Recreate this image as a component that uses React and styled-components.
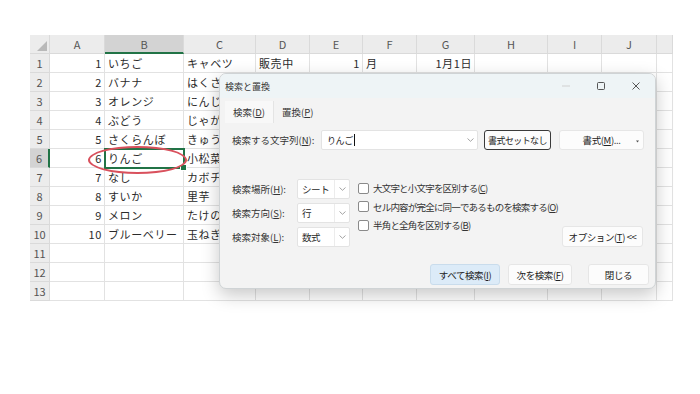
import React from "react";
import styled, { createGlobalStyle } from "styled-components";

const GlobalStyle = createGlobalStyle`
  html, body {
    margin: 0;
    padding: 0;
    background: #fff;
  }
  body {
    font-family: "Noto Sans CJK JP", "Noto Sans", sans-serif;
  }
`;

const columns = ["A", "B", "C", "D", "E", "F", "G", "H", "I", "J", ""];
const colWidths = [20, 55, 79, 72, 54, 53, 54, 58, 73, 54, 55, 16];

const rows = [
  ["1", "いちご", "キャベツ", "販売中", "1", "月", "1月1日"],
  ["2", "バナナ", "はくさい"],
  ["3", "オレンジ", "にんじん"],
  ["4", "ぶどう", "じゃがいも"],
  ["5", "さくらんぼ", "きゅうり"],
  ["6", "りんご", "小松菜"],
  ["7", "なし", "カボチャ"],
  ["8", "すいか", "里芋"],
  ["9", "メロン", "たけのこ"],
  ["10", "ブルーベリー", "玉ねぎ"],
  [],
  [],
  [],
];

// columns holding numbers / dates are right aligned
const rightCols = [0, 4, 6];

const Page = styled.div`
  position: relative;
  width: 700px;
  height: 394px;
  padding: 35px 0 0 30px;
  box-sizing: border-box;
  overflow: hidden;
`;

const Sheet = styled.div`
  display: grid;
  grid-template-columns: ${colWidths.map((w) => w + "px").join(" ")};
  grid-auto-rows: 19px;
  width: max-content;
  font-size: 11px;
  color: #2b2b2b;
`;

const Cell = styled.div`
  position: relative;
  box-sizing: border-box;
  display: flex;
  align-items: center;
  justify-content: ${(p) => (p.$right ? "flex-end" : "flex-start")};
  padding: 0 2px 0 3px;
  border-right: 1px solid #e2e2e2;
  border-bottom: 1px solid #e2e2e2;
  white-space: nowrap;
  overflow: ${(p) => (p.$active ? "visible" : "hidden")};
  letter-spacing: 0.6px;
  ${(p) =>
    p.$active &&
    `
    z-index: 1;
    outline: 2px solid #217346;
    outline-offset: -1px;
    &::after {
      content: "";
      position: absolute;
      right: -4px;
      bottom: -4px;
      width: 5px;
      height: 5px;
      background: #217346;
      border: 1px solid #fff;
    }
  `}
`;

const HeadCell = styled.div`
  box-sizing: border-box;
  display: flex;
  align-items: center;
  justify-content: center;
  background: ${(p) => (p.$selected ? "#d3d3d3" : "#ececec")};
  color: #555;
  border-right: ${(p) =>
    p.$selected && p.$row ? "2px solid #217346" : "1px solid #dadada"};
  border-bottom: ${(p) =>
    p.$selected && !p.$row ? "2px solid #217346" : "1px solid #dadada"};
  font-size: 11px;
`;

const Corner = styled(HeadCell)`
  align-items: flex-end;
  justify-content: flex-end;
  padding: 0 2px 2px 0;
`;

const Circle = styled.div`
  position: absolute;
  left: 88px;
  top: 146px;
  width: 99px;
  height: 28px;
  box-sizing: border-box;
  border: 2px solid #d9515d;
  border-radius: 50%;
  z-index: 2;
`;

/* ---------- dialog ---------- */

const Dialog = styled.div`
  position: absolute;
  left: 219px;
  top: 73px;
  width: 437px;
  height: 216px;
  box-sizing: border-box;
  display: flex;
  flex-direction: column;
  background: #f3f3f3;
  border: 1px solid #cfd3d5;
  border-radius: 7px;
  box-shadow: 0 6px 18px rgba(0, 0, 0, 0.22);
  overflow: hidden;
  z-index: 3;
  font-size: 9.5px;
  color: #1f1f1f;
`;

const TitleBar = styled.div`
  height: 24px;
  flex-shrink: 0;
  display: flex;
  align-items: center;
  padding-left: 5px;
  background: #eef4f6;
  font-size: 9px;
  color: #333;
`;

const WinControls = styled.div`
  margin-left: auto;
  display: flex;
  padding-right: 2px;
`;

const WinButton = styled.div`
  width: 35px;
  height: 24px;
  display: flex;
  align-items: center;
  justify-content: center;
`;

const Body = styled.div`
  flex: 1;
  display: flex;
  flex-direction: column;
  padding: 0 12px;
`;

const Tabs = styled.div`
  display: flex;
  height: 22px;
  margin: 3px 0 0 -7px;
`;

const Tab = styled.div`
  display: flex;
  align-items: center;
  padding: 0 8px;
  background: ${(p) => (p.$active ? "#f8f8f8" : "transparent")};
  border-right: ${(p) => (p.$active ? "1px solid #e4e4e4" : "none")};
  color: #333;
  white-space: pre;
`;

const Key = styled.span`
  text-decoration: underline;
`;

const Row = styled.div`
  display: flex;
  align-items: center;
`;

const SearchRow = styled(Row)`
  margin-top: 7px;
  height: 20px;
`;

const Label = styled.div`
  width: ${(p) => p.$w}px;
  flex-shrink: 0;
  white-space: pre;
  color: #333;
`;

const Field = styled.div`
  box-sizing: border-box;
  width: ${(p) => p.$w}px;
  height: 20px;
  flex-shrink: 0;
  display: flex;
  align-items: center;
  background: #fff;
  border: 1px solid #e3e3e3;
  border-radius: 2px;
`;

const FieldText = styled.div`
  flex: 1;
  display: flex;
  align-items: center;
  padding-left: ${(p) => (p.$small ? 5 : 4)}px;
  font-size: ${(p) => (p.$small ? "9px" : "9.5px")};
  letter-spacing: -0.4px;
  white-space: nowrap;
  overflow: hidden;
`;

const Caret = styled.span`
  width: 1px;
  height: 12px;
  background: #111;
  margin-left: 1px;
`;

const Chevron = styled.div`
  width: 14px;
  height: 100%;
  flex-shrink: 0;
  display: flex;
  align-items: center;
  justify-content: center;
  border-left: ${(p) => (p.$split ? "1px solid #ececec" : "none")};
`;

const Button = styled.div`
  box-sizing: border-box;
  width: ${(p) => p.$w}px;
  height: ${(p) => p.$h || 20}px;
  margin-left: ${(p) => p.$ml || 0}px;
  flex-shrink: 0;
  display: flex;
  align-items: center;
  justify-content: center;
  position: relative;
  white-space: pre;
  font-size: ${(p) => (p.$default ? "9px" : "inherit")};
  letter-spacing: ${(p) => (p.$default ? "-0.6px" : "-0.4px")};
  background: ${(p) => (p.$primary ? "#dcebf8" : "#fcfcfc")};
  border: ${(p) =>
    p.$default
      ? "1.5px solid #3a3a3a"
      : p.$primary
      ? "1px solid #c9dcec"
      : "1px solid #e6e6e6"};
  border-radius: 3px;
  color: #222;
`;

const MenuMark = styled.div`
  position: absolute;
  right: 4px;
  top: 8px;
  line-height: 0;
`;

const Options = styled.div`
  display: flex;
  margin-top: 29px;
`;

const SelectCol = styled.div`
  display: flex;
  flex-direction: column;
  gap: 4px;
`;

const CheckCol = styled.div`
  display: flex;
  flex-direction: column;
  gap: 6.5px;
  margin: 3px 0 0 8px;
  flex-shrink: 0;
`;

const CheckRow = styled(Row)`
  gap: 4px;
  height: 12px;
  color: #333;
  white-space: pre;
  letter-spacing: -0.8px;
`;

const Box = styled.div`
  box-sizing: border-box;
  width: 11px;
  height: 11px;
  flex-shrink: 0;
  background: #fff;
  border: 1px solid #8a8a8a;
  border-radius: 2px;
`;

const OptionsButtonWrap = styled.div`
  margin-left: auto;
  align-self: flex-end;
`;

const Footer = styled.div`
  display: flex;
  justify-content: flex-end;
  margin: 17px -6px 0 0;
`;

const ChevronIcon = () => (
  <svg width="7" height="4" viewBox="0 0 7 4">
    <path d="M0.5 0.5 L3.5 3.3 L6.5 0.5" fill="none" stroke="#9a9a9a" strokeWidth="0.9" />
  </svg>
);

const SelectBox = ({ value }) => (
  <Field $w={53}>
    <FieldText>{value}</FieldText>
    <Chevron $split>
      <ChevronIcon />
    </Chevron>
  </Field>
);

const Check = ({ children }) => (
  <CheckRow>
    <Box />
    <span>{children}</span>
  </CheckRow>
);

const FindDialog = () => (
  <Dialog>
    <TitleBar>
      検索と置換
      <WinControls>
        <WinButton>
          <svg width="8" height="2" viewBox="0 0 8 2">
            <path d="M0 1 H8" stroke="#c8c8c8" strokeWidth="0.8" />
          </svg>
        </WinButton>
        <WinButton>
          <svg width="8" height="8" viewBox="0 0 8 8">
            <rect x="0.5" y="0.5" width="7" height="7" rx="1" fill="none" stroke="#444" strokeWidth="0.9" />
          </svg>
        </WinButton>
        <WinButton>
          <svg width="8" height="8" viewBox="0 0 8 8">
            <path d="M0.5 0.5 L7.5 7.5 M7.5 0.5 L0.5 7.5" stroke="#444" strokeWidth="0.9" />
          </svg>
        </WinButton>
      </WinControls>
    </TitleBar>
    <Body>
      <Tabs>
        <Tab $active>
          検索(<Key>D</Key>)
        </Tab>
        <Tab>
          置換(<Key>P</Key>)
        </Tab>
      </Tabs>

      <SearchRow>
        <Label $w={89}>
          検索する文字列(<Key>N</Key>):
        </Label>
        <Field $w={157}>
          <FieldText $small>
            りんご
            <Caret />
          </FieldText>
          <Chevron>
            <ChevronIcon />
          </Chevron>
        </Field>
        <Button $w={67} $ml={6} $default>
          書式セットなし
        </Button>
        <Button $w={85} $ml={8}>
          書式(<Key>M</Key>)...
          <MenuMark>
            <svg width="3" height="3" viewBox="0 0 3 3">
              <path d="M0 0.5 H3 L1.5 2.5 Z" fill="#555" />
            </svg>
          </MenuMark>
        </Button>
      </SearchRow>

      <Options>
        <SelectCol>
          <Row>
            <Label $w={65}>
              検索場所(<Key>H</Key>):
            </Label>
            <SelectBox value="シート" />
          </Row>
          <Row>
            <Label $w={65}>
              検索方向(<Key>S</Key>):
            </Label>
            <SelectBox value="行" />
          </Row>
          <Row>
            <Label $w={65}>
              検索対象(<Key>L</Key>):
            </Label>
            <SelectBox value="数式" />
          </Row>
        </SelectCol>
        <CheckCol>
          <Check>
            大文字と小文字を区別する(<Key>C</Key>)
          </Check>
          <Check>
            セル内容が完全に同一であるものを検索する(<Key>O</Key>)
          </Check>
          <Check>
            半角と全角を区別する(<Key>B</Key>)
          </Check>
        </CheckCol>
        <OptionsButtonWrap>
          <Button $w={81} $h={21}>
            オプション(<Key>T</Key>) &lt;&lt;
          </Button>
        </OptionsButtonWrap>
      </Options>

      <Footer>
        <Button $w={70} $h={21} $primary>
          すべて検索(<Key>I</Key>)
        </Button>
        <Button $w={64} $h={21} $ml={8}>
          次を検索(<Key>F</Key>)
        </Button>
        <Button $w={61} $h={21} $ml={16}>
          閉じる
        </Button>
      </Footer>
    </Body>
  </Dialog>
);

const App = () => {
  return (
    <>
      <GlobalStyle />
      <Page>
        <Sheet>
          <Corner>
            <svg width="10" height="10" viewBox="0 0 10 10">
              <path d="M10 0 V10 H0 Z" fill="#b9b9b9" />
            </svg>
          </Corner>
          {columns.map((c, i) => (
            <HeadCell key={"h" + i} $selected={c === "B"}>
              {c}
            </HeadCell>
          ))}
          {rows.map((r, ri) => (
            <React.Fragment key={ri}>
              <HeadCell $row $selected={ri === 5}>
                {ri + 1}
              </HeadCell>
              {columns.map((c, ci) => (
                <Cell
                  key={ci}
                  $right={rightCols.includes(ci)}
                  $active={ri === 5 && ci === 1}
                >
                  {r[ci] || ""}
                </Cell>
              ))}
            </React.Fragment>
          ))}
        </Sheet>
        <Circle />
        <FindDialog />
      </Page>
    </>
  );
};

export default App;
